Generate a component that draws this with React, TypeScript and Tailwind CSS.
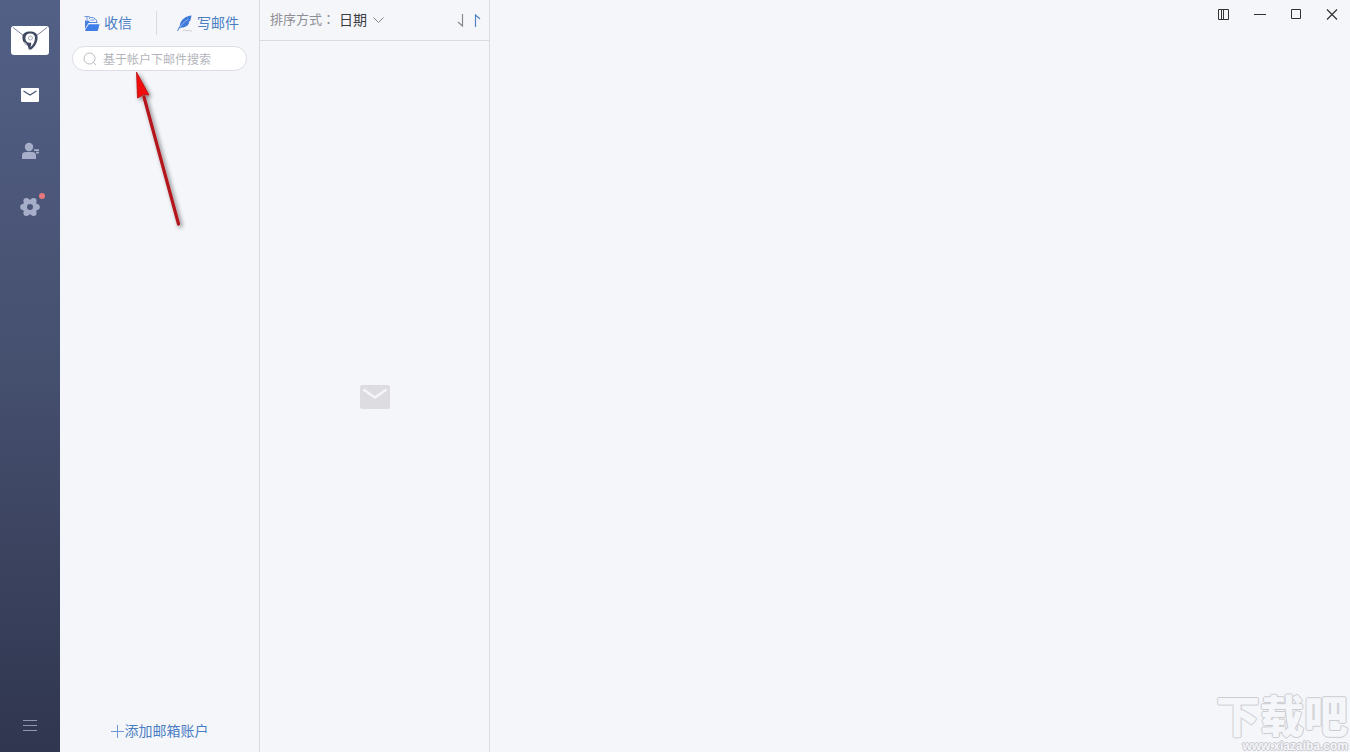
import { useState } from "react";
import type { ReactNode } from "react";

interface NavItem {
  id: string;
  label: string;
  icon: ReactNode;
  badge?: boolean;
}

function LogoIcon() {
  return (
    <svg width="38" height="29" viewBox="0 0 38 29" aria-hidden="true">
      <rect width="38" height="29" rx="3" fill="#fff" />
      <path d="M2 1.500 13 10M36 1.500 25 10" stroke="#7a8198" strokeWidth="1" fill="none" />
      <path
        d="M19 5.400c4.400 0 7.600 1.600 7.600 6.200 0 5-3 9.600-6.400 12h-2.400l-1-3.600c-2.800-1-5.400-4.400-5.400-8.400 0-4.600 3.200-6.200 7.600-6.200Z"
        fill="#414a63"
      />
      <path
        d="M19.200 7.600c3.200 0 4.800 1.700 4.800 4.400 0 3.600-1.700 6.600-4.600 9.200.8-1.800 1-3.200.6-4.800-3 1-5.600-1-5.600-4 0-3.100 1.800-4.800 4.800-4.800Z"
        fill="#fff"
      />
      <circle cx="19.400" cy="12" r="2" fill="none" stroke="#a7acb9" strokeWidth="1" />
      <path d="m12 16.500 2.500.5 1.800 3.500" stroke="#fff" strokeWidth=".8" fill="none" />
    </svg>
  );
}

function MailIcon() {
  return (
    <svg width="18" height="14" viewBox="0 0 18 14" aria-hidden="true">
      <rect width="18" height="14" rx="1" fill="#fff" />
      <path d="m2.500 3 6.500 4 6.500-4" stroke="#4a5678" strokeWidth="1.300" fill="none" />
    </svg>
  );
}

function ContactIcon() {
  return (
    <svg width="18" height="18" viewBox="0 0 18 18" fill="#a7aec9" aria-hidden="true">
      <circle cx="8" cy="5" r="4.200" />
      <path d="M1 17v-3.500C1 11 2.500 10 5 10h6c2.500 0 4 1 4 3.500V17Z" />
      <path d="M13 7.200h5.500v1.800H13zM15 9.800h3v1.800h-3z" />
    </svg>
  );
}

function GearIcon() {
  return (
    <svg width="20" height="20" viewBox="0 0 20 20" fill="#a7aec9" aria-hidden="true">
      <circle cx="10" cy="10" r="5.300" fill="none" stroke="#a7aec9" strokeWidth="4.600" />
      <circle cx="3.200" cy="10" r="3" />
      <circle cx="16.800" cy="10" r="3" />
      <circle cx="6.400" cy="4" r="3" />
      <circle cx="13.600" cy="4" r="3" />
      <circle cx="6.400" cy="16" r="3" />
      <circle cx="13.600" cy="16" r="3" />
    </svg>
  );
}

function InboxIcon() {
  return (
    <svg width="16" height="17" viewBox="0 0 16 17" fill="none" aria-hidden="true">
      <path d="M.5 1.500h5M3 1.500V5M5.500 4V2.500H9L12.500 5v2" stroke="#6f97dc" />
      <path d="M1 5.500h3.500L6 7h7.500v1H4.500L1 14Z" fill="#4a82e0" />
      <path d="M4.800 9.200H15.500L14 15.200q-.2.800-1 .8H2Q.8 16 1.200 15Z" fill="#3f7de8" />
      <path d="M6.500 5h4" stroke="#6f97dc" />
    </svg>
  );
}

function FeatherIcon() {
  return (
    <svg width="16" height="17" viewBox="0 0 16 17" fill="none" aria-hidden="true">
      <path
        d="M14.500.5C9 1 3.500 4.500 2.800 10.500L1.500 13.500l3.500-1C9 12.500 11.500 10 12.300 7.500l-1-.3 1.800-1.200C14 4 14.200 2 14.500.5Z"
        fill="#3f7ad8"
      />
      <path d="M11.500 4C7.500 6.500 4.500 9.500 2 13.500" stroke="#a9c5f2" strokeWidth=".8" />
      <path d="m2.500 12-2 4" stroke="#3f7ad8" />
      <path d="M6 15.500c2-1.500 3 1 5 .2 1-.4 2 .2 4 .3" stroke="#c9bdc4" strokeWidth=".8" />
    </svg>
  );
}

function PointerArrow() {
  return (
    <svg
      className="pointer-events-none absolute left-[125px] top-[64px]"
      width="70"
      height="174"
      viewBox="125 64 70 174"
      aria-hidden="true"
    >
      <defs>
        <filter id="arrow-shadow" x="-50%" y="-20%" width="200%" height="140%">
          <feDropShadow dx="2" dy="2" stdDeviation="2" floodColor="#000" floodOpacity=".5" />
        </filter>
      </defs>
      <g filter="url(#arrow-shadow)">
        <path d="m144 97 34.500 127" stroke="#b3161c" strokeWidth="3.200" strokeLinecap="round" />
        <path d="M136.500 72 149 95l-5-.5-6.500 3.500Z" fill="#f00b0b" stroke="#b81212" strokeWidth=".8" />
      </g>
    </svg>
  );
}

const NAV_ITEMS: NavItem[] = [
  { id: "mail", label: "邮件", icon: <MailIcon /> },
  { id: "contacts", label: "联系人", icon: <ContactIcon /> },
  { id: "settings", label: "设置", icon: <GearIcon />, badge: true },
];

function Sidebar() {
  const [active, setActive] = useState("mail");

  return (
    <aside className="flex w-15 shrink-0 flex-col items-center bg-linear-to-b from-[#536086] via-[#454f6e] to-[#30364f] pt-[26px] pb-[13px]">
      <LogoIcon />
      <nav className="mt-3 flex flex-col">
        {NAV_ITEMS.map((item) => (
          <button
            key={item.id}
            type="button"
            aria-label={item.label}
            aria-current={active === item.id ? "page" : undefined}
            className="flex h-14 w-15 items-center justify-center"
            onClick={() => setActive(item.id)}
          >
            <span className="relative">
              {item.icon}
              {item.badge && (
                <span className="absolute -right-[5px] -top-1 size-1.5 rounded-full bg-[#e87880]" />
              )}
            </span>
          </button>
        ))}
      </nav>
      <button type="button" aria-label="菜单" className="mt-auto flex h-7 w-15 items-center justify-center">
        <svg width="14" height="11" viewBox="0 0 14 11" stroke="#8f96ae" aria-hidden="true">
          <path d="M0 .5h14M0 5.500h14M0 10.500h14" />
        </svg>
      </button>
    </aside>
  );
}

function AccountPanel() {
  return (
    <section className="flex w-[200px] shrink-0 flex-col border-r border-[#d9dbe1]">
      <div className="flex h-[46px] items-center pl-6 pr-5 text-sm text-[#4a7ec4]">
        <button type="button" className="flex items-center gap-1">
          <InboxIcon />
          收信
        </button>
        <span className="ml-6 h-6 w-px bg-[#d9dbe1]" />
        <button type="button" className="ml-auto flex items-center gap-1">
          <FeatherIcon />
          写邮件
        </button>
      </div>
      <label className="mx-3 flex h-[25px] items-center gap-1.5 rounded-full border border-[#dcdee5] bg-white pl-2.5 pr-3">
        <svg className="shrink-0" width="14" height="14" viewBox="0 0 14 14" fill="none" stroke="#b8bac2" aria-hidden="true">
          <circle cx="6.500" cy="6.500" r="5.500" />
          <path d="m10.500 10.500 2.500 2.500" />
        </svg>
        <input
          type="text"
          aria-label="搜索"
          placeholder="基于帐户下邮件搜索"
          className="w-full min-w-0 bg-transparent pt-0.5 text-xs text-[#333] outline-none placeholder:text-[#b4b6bd]"
        />
      </label>
      <button
        type="button"
        className="mb-[11px] mt-auto flex items-center justify-center gap-px self-center text-sm text-[#4a7ec4]"
      >
        <svg width="13" height="13" viewBox="0 0 13 13" stroke="#6f97d2" aria-hidden="true">
          <path d="M0 6.500h13M6.500 0v13" />
        </svg>
        添加邮箱账户
      </button>
    </section>
  );
}

function MessageList() {
  return (
    <section className="flex w-[230px] shrink-0 flex-col border-r border-[#d9dbe1]">
      <header className="flex h-[41px] items-center border-b border-[#d9dbe1] pl-2.5 pr-2">
        <span className="font-['Liberation_Sans','Noto_Sans_CJK_TC',sans-serif] text-[13px] text-[#8d8e93]">
          排序方式：
        </span>
        <button type="button" className="ml-1 flex items-center gap-1.5 text-sm text-[#3c3d42]">
          日期
          <svg width="11" height="7" viewBox="0 0 11 7" fill="none" stroke="#85878e" aria-hidden="true">
            <path d="m.5.500 5 5 5-5" />
          </svg>
        </button>
        <div className="ml-auto flex gap-2.5">
          <button type="button" aria-label="降序">
            <svg width="7" height="13" viewBox="0 0 7 13" fill="none" stroke="#85878e" strokeWidth="1.200" aria-hidden="true">
              <path d="M5.500 0v12L1 8" />
            </svg>
          </button>
          <button type="button" aria-label="升序">
            <svg width="7" height="13" viewBox="0 0 7 13" fill="none" stroke="#4f83c8" strokeWidth="1.200" aria-hidden="true">
              <path d="M1.500 13V1L6 5" />
            </svg>
          </button>
        </div>
      </header>
      <div className="flex flex-1 items-center justify-center">
        <svg width="30" height="24" viewBox="0 0 30 24" fill="none" aria-hidden="true">
          <rect width="30" height="24" rx="2.500" fill="#dddce0" />
          <path d="m3.500 4.500 11.500 8 11.500-8" stroke="#f6f6f9" strokeWidth="2.400" />
        </svg>
      </div>
    </section>
  );
}

function WindowControls() {
  return (
    <div className="flex justify-end text-[#333]">
      <button type="button" aria-label="布局" className="flex h-[29px] w-9 items-center justify-center">
        <svg width="12" height="11" viewBox="0 0 12 11" fill="none" stroke="currentColor" aria-hidden="true">
          <path d="M.5.500h10v10H.5zM3.500.5v10M5.500.5v10" />
        </svg>
      </button>
      <button type="button" aria-label="最小化" className="flex h-[29px] w-9 items-center justify-center">
        <svg width="12" height="11" viewBox="0 0 12 11" stroke="currentColor" aria-hidden="true">
          <path d="M0 5.500h12" />
        </svg>
      </button>
      <button type="button" aria-label="最大化" className="flex h-[29px] w-9 items-center justify-center">
        <svg width="12" height="11" viewBox="0 0 12 11" fill="none" stroke="currentColor" aria-hidden="true">
          <path d="M1.500.500h9v9h-9z" />
        </svg>
      </button>
      <button type="button" aria-label="关闭" className="flex h-[29px] w-9 items-center justify-center">
        <svg width="12" height="11" viewBox="0 0 12 11" stroke="currentColor" strokeWidth="1.200" aria-hidden="true">
          <path d="m1 .5 10 10M11 .5l-10 10" />
        </svg>
      </button>
    </div>
  );
}

function Watermark() {
  return (
    <div className="pointer-events-none absolute bottom-0 right-0.5 flex select-none flex-col items-end text-[#f5f6fa]">
      <p className="whitespace-nowrap text-[44px] font-black leading-[44px] [text-shadow:1px_0_#ccccd0,-1px_0_#ccccd0,0_1px_#ccccd0,0_-1px_#ccccd0]">
        下载吧
      </p>
      <p className="text-[12px] font-bold leading-3 [text-shadow:1px_0_#c8c8cc,-1px_0_#c8c8cc,0_1px_#c8c8cc,0_-1px_#c8c8cc]">
        www.xiazaiba.com
      </p>
    </div>
  );
}

export default function App() {
  return (
    <div className="relative flex h-screen overflow-hidden bg-[#f5f6fa] font-['Liberation_Sans','Noto_Sans_CJK_SC',sans-serif]">
      <Sidebar />
      <AccountPanel />
      <MessageList />
      <main className="min-w-0 flex-1">
        <WindowControls />
      </main>
      <Watermark />
      <PointerArrow />
    </div>
  );
}
